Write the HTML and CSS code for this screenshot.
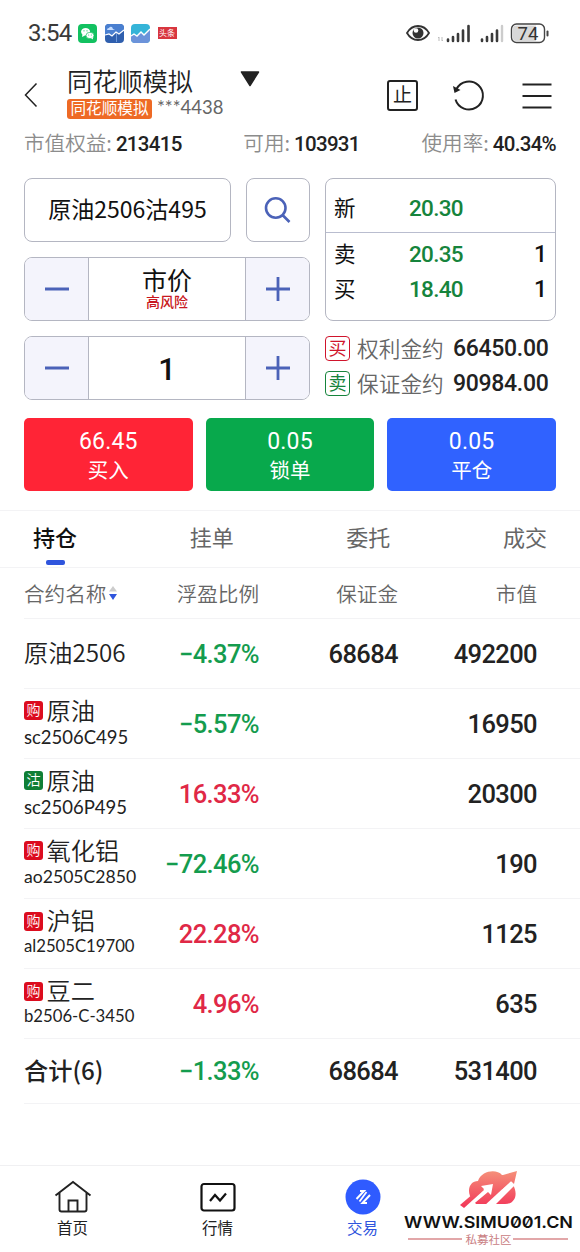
FILE: index.html
```
<!DOCTYPE html>
<html lang="zh-CN">
<head>
    <meta charset="utf-8">
    <title>同花顺模拟</title>
    <link rel="stylesheet" href="styles.css">
</head>
<body>
<div class="status">
    <span class="time">3:54</span>
    <svg class="app" width="19" height="19" viewBox="0 0 19 19">
        <rect width="19" height="19" rx="4" fill="#12c160"/>
        <ellipse cx="7.600" cy="7.800" rx="4.500" ry="3.800" fill="#fff"/>
        <path d="M4.500 10l-.5 3 3-1.600z" fill="#fff"/>
        <ellipse cx="12" cy="11.500" rx="4" ry="3.200" fill="#fff" stroke="#12c160" stroke-width=".7"/>
        <path d="M13 14l2 1.500-.2-2.500z" fill="#fff"/>
        <g fill="#12c160"><circle cx="6" cy="6.800" r=".6"/><circle cx="9" cy="6.800" r=".6"/><circle cx="10.700" cy="11" r=".5"/><circle cx="13.300" cy="11" r=".5"/></g>
    </svg>
    <svg class="app" width="19" height="19" viewBox="0 0 19 19">
        <rect width="19" height="19" rx="4" fill="#2f5fae"/>
        <path d="M0 11l4-1 3 2 4-4 3 2 5-4V4a4 4 0 0 0-4-4H4a4 4 0 0 0-4 4z" fill="#4a7fd0"/>
        <path d="M0 11l4-1 3 2 4-4 3 2 5-4" fill="none" stroke="#fff" stroke-width="1.200"/>
        <path d="M2 6q0-2 2-2 1-2 3-1l1 2h2l-2 1z" fill="#c4dcff"/>
        <path d="M11.500 9v9" fill="none" stroke="#7fa8e4" stroke-width=".8"/>
    </svg>
    <svg class="app" width="19" height="19" viewBox="0 0 19 19">
        <rect width="19" height="19" rx="4" fill="#35b4d8"/>
        <path d="M0 12l3-2 3 2 4-4 3 3 6-6v10a4 4 0 0 1-4 4H4a4 4 0 0 1-4-4z" fill="#6c93da"/>
        <path d="M0 12l3-2 3 2 4-4 3 3 6-6" fill="none" stroke="#fff" stroke-width="1.400"/>
    </svg>
    <span class="toutiao">头条</span>
    <svg class="signals" width="145" height="24" viewBox="0 0 145 24">
        <path d="M2 12Q6 5 13 5t11 7q-4 7-11 7t-11-7z" fill="none" stroke="#333" stroke-width="1.800"/>
        <circle cx="13" cy="12" r="5.500" fill="#333"/>
        <circle cx="11" cy="9.500" r="2.300" fill="#fff"/>
        <path d="M34 16v4M34 16l-1 1M37 16v4M37 20l1-1" stroke="#bbb" fill="none"/>
        <path d="M43 18.500v1.500M48 16v4M53 13v7M58 9.500v10.500M63.500 5v15" stroke="#3a3a3a" stroke-width="2.600" stroke-linecap="round"/>
        <path d="M77 18.500v1.500M82 16v4M87 13v7M92 9.500v10.500" stroke="#3a3a3a" stroke-width="2.600" stroke-linecap="round"/>
        <path d="M97 5v15" stroke="#ccc" stroke-width="2.400" stroke-linecap="round"/>
        <rect x="106.500" y="3" width="33" height="18.500" rx="5" fill="#fff" stroke="#444" stroke-width="1.400"/>
        <path d="M111 4.500h20v15.500h-20a3 3 0 0 1-3-3v-9.500a3 3 0 0 1 3-3z" fill="#d8d8d8"/>
        <path d="M142.500 10.500v4" stroke="#444" stroke-width="2" stroke-linecap="round"/>
        <text x="123" y="18.800" class="battery">74</text>
    </svg>
</div>

<div class="header">
    <svg class="back" width="14" height="26" viewBox="0 0 14 26"><path d="M12.500 1.500L1.500 13l11 11.500" fill="none" stroke="#222" stroke-width="1.500"/></svg>
    <div class="account">
        <div class="title">同花顺模拟</div>
        <div class="sub"><span class="tag">同花顺模拟</span><span class="acct">***4438</span></div>
    </div>
    <svg class="drop" width="20" height="16" viewBox="0 0 20 16"><path d="M1.500 1h17L10 14.500z" fill="#222" stroke="#222" stroke-width="1.500" stroke-linejoin="round"/></svg>
    <span class="stop">止</span>
    <svg class="refresh" width="34" height="34" viewBox="0 0 34 34">
        <path d="M5.500 10A14 14 0 1 1 4.500 20.500" fill="none" stroke="#222" stroke-width="2"/>
        <path d="M2 7l1.500 7L9.500 11z" fill="#222"/>
    </svg>
    <svg class="menu" width="30" height="28" viewBox="0 0 30 28"><path d="M.5 2.500h29M.5 14h29M.5 25.500h29" stroke="#222" stroke-width="2.200"/></svg>
</div>

<div class="stats">
    <span>市值权益:<b>213415</b></span>
    <span>可用:<b>103931</b></span>
    <span>使用率:<b>40.34%</b></span>
</div>

<div class="panel">
    <div class="inputs">
        <div class="search-row">
            <div class="contract">原油2506沽495</div>
            <div class="search"><svg width="28" height="28" viewBox="0 0 28 28"><path d="M18.500 19l7 7M21.500 12A9.700 9.700 0 1 1 2 12a9.700 9.700 0 1 1 19.500 0z" fill="none" stroke="#4b62b8" stroke-width="2.600"/></svg></div>
        </div>
        <div class="stepper">
            <span class="step"><svg width="26" height="26" viewBox="0 0 26 26"><path d="M1 13h24"/></svg></span>
            <div class="value"><span class="market">市价</span><span class="risk">高风险</span></div>
            <span class="step"><svg width="26" height="26" viewBox="0 0 26 26"><path d="M1 13h24M13 1v24"/></svg></span>
        </div>
        <div class="stepper">
            <span class="step"><svg width="26" height="26" viewBox="0 0 26 26"><path d="M1 13h24"/></svg></span>
            <div class="value"><span class="qty">1</span></div>
            <span class="step"><svg width="26" height="26" viewBox="0 0 26 26"><path d="M1 13h24M13 1v24"/></svg></span>
        </div>
    </div>
    <div class="quotes">
        <div class="book">
            <div class="quote last"><span>新</span><b>20.30</b></div>
            <div class="quote"><span>卖</span><b>20.35</b><i>1</i></div>
            <div class="quote"><span>买</span><b>18.40</b><i>1</i></div>
        </div>
        <div class="cost"><span class="side buy">买</span><span class="label">权利金约</span><b>66450.00</b></div>
        <div class="cost"><span class="side sell">卖</span><span class="label">保证金约</span><b>90984.00</b></div>
    </div>
</div>

<div class="actions">
    <div class="btn red"><b>66.45</b><span>买入</span></div>
    <div class="btn green"><b>0.05</b><span>锁单</span></div>
    <div class="btn blue"><b>0.05</b><span>平仓</span></div>
</div>

<div class="tabs">
    <span class="tab active">持仓</span>
    <span class="tab">挂单</span>
    <span class="tab">委托</span>
    <span class="tab">成交</span>
</div>

<div class="list">
    <div class="row head">
        <span class="sort">合约名称<svg width="10" height="16" viewBox="0 0 10 16"><path d="M5 1l4 5.500H1z" fill="#ccc"/><path d="M5 15L1 9h8z" fill="#2f55dd"/></svg></span>
        <span>浮盈比例</span><span>保证金</span><span>市值</span>
    </div>
    <div class="row">
        <div class="name">原油2506</div>
        <span class="down">−4.37%</span><span>68684</span><span>492200</span>
    </div>
    <div class="row">
        <div><div class="name"><em class="call">购</em>原油</div><div class="code">sc2506C495</div></div>
        <span class="down">−5.57%</span><span></span><span>16950</span>
    </div>
    <div class="row">
        <div><div class="name"><em class="put">沽</em>原油</div><div class="code">sc2506P495</div></div>
        <span class="up">16.33%</span><span></span><span>20300</span>
    </div>
    <div class="row">
        <div><div class="name"><em class="call">购</em>氧化铝</div><div class="code long">ao2505C2850</div></div>
        <span class="down">−72.46%</span><span></span><span>190</span>
    </div>
    <div class="row">
        <div><div class="name"><em class="call">购</em>沪铝</div><div class="code longer">al2505C19700</div></div>
        <span class="up">22.28%</span><span></span><span>1125</span>
    </div>
    <div class="row">
        <div><div class="name"><em class="call">购</em>豆二</div><div class="code longer">b2506-C-3450</div></div>
        <span class="up">4.96%</span><span></span><span>635</span>
    </div>
    <div class="row total">
        <div class="name">合计(6)</div>
        <span class="down">−1.33%</span><span>68684</span><span>531400</span>
    </div>
</div>

<div class="nav">
    <div class="item">
        <svg width="38" height="36" viewBox="0 0 38 36"><path d="M1.500 16.500L19 3l17.500 13.500M5.500 14v16.500q0 2 2 2h23q2 0 2-2V14M14.500 32V21.500h9V32" fill="none" stroke="#222" stroke-width="1.900"/></svg>
        <span>首页</span>
    </div>
    <div class="item">
        <svg width="38" height="36" viewBox="0 0 38 36"><rect x="2.500" y="5" width="33" height="26.500" rx="2.500" fill="none" stroke="#111" stroke-width="2.200"/><path d="M11 22l5-6 5 5.500 6-7" fill="none" stroke="#111" stroke-width="2.200"/></svg>
        <span>行情</span>
    </div>
    <div class="item on">
        <svg width="38" height="36" viewBox="0 0 38 36"><circle cx="19" cy="18" r="17.500" fill="#2f5bff"/><path d="M12.500 20L20 12h-4M26 16l-7.500 8h4.500" fill="none" stroke="#fff" stroke-width="2"/><path d="M15.500 22.500l7-9.500" stroke="#fff" stroke-width="1.800"/></svg>
        <span>交易</span>
    </div>
    <svg class="mark" width="176" height="82" viewBox="0 0 176 82">
        <defs>
            <linearGradient id="cloud" gradientUnits="userSpaceOnUse" x1="0" y1="5" x2="0" y2="42"><stop offset="0" stop-color="#f5907a"/><stop offset="1" stop-color="#f23558"/></linearGradient>
        </defs>
        <path d="M66 30C63 22 67 15 74 15C78 4 93 3 98 9C106 8 110 14 109 19C114 27 112 38 101 38H72Z" fill="url(#cloud)"/>
        <path d="M66 41L84 26L87 29L89 18L77 20L80 23L62 39Z" fill="#fff"/>
        <path d="M80 40L107 15L112 18L90 40Z" fill="#fff"/>
        <path d="M56 39L77 21L80 24L60 42Z" fill="url(#cloud)"/>
        <path d="M102 13L99 9L113 5L110 18L107 15L98 23L94 20Z" fill="url(#cloud)"/>
        <text x="0" y="62" class="url" textLength="169" lengthAdjust="spacingAndGlyphs">WWW.SIMU001.CN</text>
        <path d="M4 73h54M109 73h55" stroke="#d98a8d" stroke-width="1.400"/>
        <text x="61.500" y="77.500" class="club">私募社区</text>
    </svg>
</div>
</body>
</html>
```
FILE: styles.css
```
* {
    box-sizing: border-box;
}

body {
    margin: 0;
    width: 580px;
    height: 1252px;
    background: #fff;
    color: #222;
    font-family: "Noto Sans CJK SC", sans-serif;
    font-weight: 400;
    overflow: hidden;
    display: flex;
    flex-direction: column;
}

b, i, em {
    font-style: normal;
}

b {
    font-family: Roboto, "Noto Sans CJK SC", sans-serif;
    font-weight: 500;
}

svg {
    flex: none;
}

.status {
    height: 66px;
    padding: 0 30px 0 28px;
    display: flex;
    align-items: center;
}

.time {
    width: 50px;
    font: 400 24px/30px Roboto, sans-serif;
    color: #3a3a3a;
    letter-spacing: -0.7px;
}

.app {
    margin-right: 7.500px;
}

.toutiao {
    width: 19px;
    height: 12px;
    background: #d8363f;
    color: #fff;
    font-size: 8px;
    line-height: 11px;
    text-align: center;
}

.signals {
    margin-left: auto;
    margin-right: 0;
}

.battery {
    font: 400 18.500px Roboto, sans-serif;
    fill: #333;
    text-anchor: middle;
}

.header {
    height: 60px;
    padding: 0 28px 0 24px;
    display: flex;
    align-items: center;
}

.back {
    margin-right: 29px;
    margin-top: -2px;
}

.account {
    width: 173px;
}

.title {
    margin-top: -6px;
    font-size: 25.200px;
    font-weight: 350;
    line-height: 31px;
}

.sub {
    display: flex;
    align-items: center;
    height: 26px;
}

.tag {
    width: 85px;
    height: 20px;
    border-radius: 3px;
    background: #ee6a25;
    color: #fff;
    font-size: 15.600px;
    line-height: 17px;
    text-align: center;
}

.acct {
    margin-left: 5px;
    margin-top: -4px;
    font: 400 18.500px/22px Lato, sans-serif;
    color: #666;
}

.drop {
    align-self: flex-start;
    margin-top: 5px;
}

.stop {
    width: 31px;
    height: 31px;
    margin-top: -2px;
    margin-left: 127px;
    border: 2px solid #222;
    border-radius: 3px;
    font-size: 19px;
    line-height: 24px;
    text-align: center;
}

.refresh {
    margin-left: 33px;
}

.menu {
    margin-left: auto;
}

.stats {
    height: 36px;
    padding: 0 24px;
    display: flex;
    justify-content: space-between;
    align-items: center;
    color: #8c8c8c;
    font-size: 20.600px;
    font-weight: 350;
    line-height: 30px;
}

.stats span {
    margin-top: -2px;
}

.stats b {
    margin-left: 4px;
    font-size: 20.500px;
    letter-spacing: -0.7px;
    color: #222;
}

.panel {
    height: 222px;
    margin: 16px 24px 0;
    display: flex;
    justify-content: space-between;
}

.inputs {
    width: 286px;
    display: flex;
    flex-direction: column;
    justify-content: space-between;
}

.search-row {
    display: flex;
    justify-content: space-between;
}

.contract, .search, .stepper {
    height: 64px;
    border: 1px solid #b4b6c2;
    border-radius: 8px;
}

.contract {
    width: 207px;
    color: #111;
    font-size: 23px;
    line-height: 58px;
    text-align: center;
}

.search {
    width: 64px;
    display: flex;
    align-items: center;
    justify-content: center;
}

.stepper {
    display: flex;
    overflow: hidden;
}

.step {
    width: 63px;
    display: flex;
    align-items: center;
    justify-content: center;
    background: #f4f4fc;
}

.step path {
    fill: none;
    stroke: #4b62b8;
    stroke-width: 2.800;
}

.value {
    flex: 1;
    display: flex;
    flex-direction: column;
    align-items: center;
    justify-content: center;
    border: solid #b4b6c2;
    border-width: 0 1px;
    color: #111;
}

.market {
    font-size: 25px;
    line-height: 25px;
    font-weight: 400;
}

.risk {
    margin-bottom: 2px;
    font-size: 14px;
    line-height: 18px;
    font-weight: 500;
    color: #c81820;
}

.qty {
    font: 500 31px/40px Roboto, sans-serif;
    padding-top: 3px;
}

.quotes {
    width: 231px;
}

.book {
    height: 143px;
    margin-bottom: 10px;
    border: 1px solid #b4b6c2;
    border-radius: 8px;
}

.quote {
    height: 35px;
    padding: 0 13px 0 8px;
    display: grid;
    grid-template-columns: 75px 1fr 20px;
    align-items: center;
    color: #111;
    font-size: 21.500px;
    line-height: 34px;
    padding-right: 8px;
}

.quote span {
    margin-top: -4px;
}

.last {
    height: 54px;
    padding-top: 6px;
    margin-bottom: 4px;
    border-bottom: 1px solid #b9bdcf;
}

.quote b {
    margin-top: -1px;
    font-size: 22.500px;
    letter-spacing: -0.7px;
    color: #16843c;
}

.quote i {
    font: 500 23px/34px Roboto, sans-serif;
    text-align: right;
}

.cost {
    height: 35px;
    display: flex;
    align-items: center;
    white-space: nowrap;
}

.side {
    width: 25px;
    height: 25px;
    border: 1.500px solid;
    border-radius: 4px;
    font-size: 18px;
    line-height: 21px;
    text-align: center;
}

.buy {
    color: #d0142c;
}

.sell {
    color: #16843c;
}

.label {
    margin-left: 7px;
    margin-top: -2px;
    width: 96px;
    color: #666;
    font-size: 21.700px;
    font-weight: 350;
    line-height: 30px;
}

.cost b {
    font-size: 23px;
    letter-spacing: -0.3px;
    color: #222;
}

.actions {
    height: 73px;
    margin: 18px 24px 19px;
    display: grid;
    grid-template-columns: repeat(3, 1fr);
    gap: 13px;
}

.btn {
    padding-top: 10px;
    border-radius: 5px;
    color: #fff;
    display: flex;
    flex-direction: column;
    align-items: center;
    font-size: 20.500px;
    line-height: 27px;
}

.btn b {
    line-height: 28px;
    font-size: 23px;
    font-weight: 400;
    letter-spacing: 0.2px;
}

.red {
    background: #ff2436;
}

.green {
    background: #08a94c;
}

.blue {
    background: #3062ff;
}

.tabs {
    height: 58px;
    padding: 0 33px;
    display: flex;
    justify-content: space-between;
    border: solid #f3f3f5;
    border-width: 1px 0;
    color: #666;
    font-size: 22px;
    line-height: 51px;
}

.active {
    color: #111;
    font-weight: 500;
    display: flex;
    flex-direction: column;
    align-items: center;
}

.active::after {
    content: "";
    width: 19px;
    height: 5px;
    margin-top: -2px;
    border-radius: 2px;
    background: #2f55dd;
}

.row {
    height: 70px;
    margin-left: 24px;
    padding-right: 43px;
    display: grid;
    grid-template-columns: 120px 115px 139px 139px;
    align-items: center;
    border-bottom: 1px solid #f3f3f5;
    white-space: nowrap;
}

.row > span {
    font: 500 25.500px/34px Roboto, sans-serif;
    letter-spacing: -0.6px;
    text-align: right;
}

.row.head {
    height: 51px;
}

.row.head > span {
    font: 350 20.600px/34px "Noto Sans CJK SC", sans-serif;
    letter-spacing: 0;
    color: #666;
}

.row .sort {
    display: flex;
    align-items: center;
}

.sort svg {
    margin-left: 2px;
}

.row.total {
    height: 65px;
}

.name {
    display: flex;
    align-items: center;
    margin-top: -3px;
    font-size: 24.200px;
    font-weight: 350;
    line-height: 28px;
}

.total .name {
    font-weight: 500;
}

.name em {
    width: 19px;
    height: 19px;
    margin-top: 2px;
    margin-right: 3.500px;
    border-radius: 3px;
    color: #fff;
    font-size: 14px;
    line-height: 17px;
    text-align: center;
}

.call {
    background: #dc0c1e;
}

.put {
    background: #0f7f35;
}

.code {
    padding-top: 1px;
    font: 400 18.500px/24px Lato, sans-serif;
}

.long {
    font-size: 17.600px;
}

.longer {
    font-size: 16.700px;
    line-height: 23px;
}

.row > .down {
    color: #149c4e;
}

.row > .up {
    color: #e02846;
}

.nav {
    position: relative;
    height: 87px;
    margin-top: auto;
    padding-top: 13px;
    display: flex;
    border-top: 1px solid #f0f0f2;
}

.item {
    width: 145px;
    display: flex;
    flex-direction: column;
    align-items: center;
    font-size: 15.500px;
    line-height: 24px;
}

.on {
    color: #2f55dd;
}

/* logo lies over the right end of the bar */
.mark {
    position: absolute;
    left: 404px;
    top: 0;
}

.url {
    font: 600 16.500px Inter, sans-serif;
    font-feature-settings: "zero";
    fill: #111;
}

.club {
    font: 400 11.500px "Noto Sans CJK SC", sans-serif;
    fill: #c98083;
}
```
